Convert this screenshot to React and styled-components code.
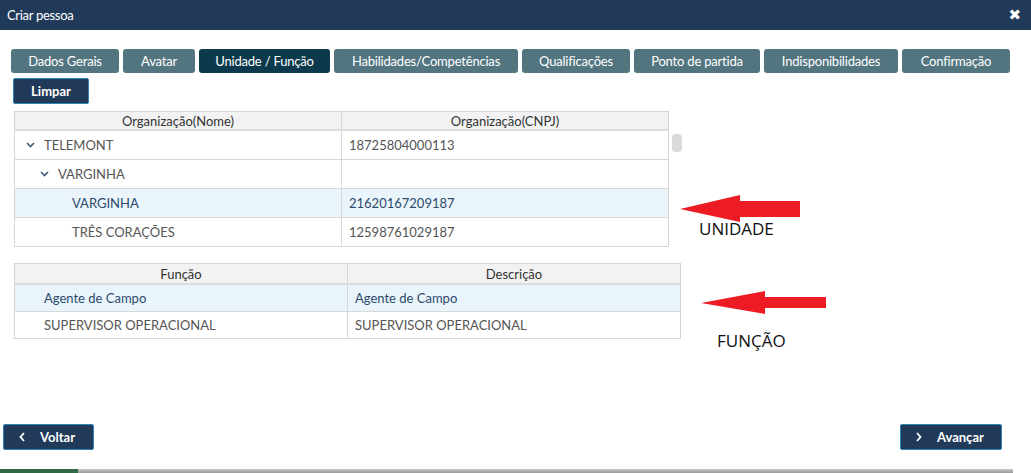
import React from 'react';
import styled, {createGlobalStyle} from 'styled-components';

const GlobalStyle = createGlobalStyle`
    html, body{
        margin: 0;
        padding: 0;
        background: #fff;
        font-family: Lato, "Open Sans", Arial, sans-serif;
    }
`

const Page = styled('div')`
    position: relative;
    width: 1031px;
    height: 473px;
    display: flex;
    flex-direction: column;
    overflow: hidden;
`

const Header = styled('div')`
    height: 30px;
    flex-shrink: 0;
    display: flex;
    align-items: center;
    justify-content: space-between;
    padding: 0 10px 0 7px;
    background: #213a5a;
    color: #fff;

    h3{
        margin: 0;
        font-size: 13px;
        font-weight: 400;
        letter-spacing: -0.3px;
    }
`

const Close = styled('span')`
    font-size: 15px;
    font-weight: 900;
    font-family: "DejaVu Sans", sans-serif;
    line-height: 1;
`

const Body = styled('div')`
    flex: 1;
    display: flex;
    flex-direction: column;
    padding: 19px 0 0 11px;
`

const Tabs = styled('div')`
    display: flex;
    gap: 4px;
`

const Tab = styled('div')`
    width: ${p => p.w}px;
    height: 24px;
    display: flex;
    align-items: center;
    justify-content: center;
    border-radius: 3px;
    background: ${p => p.active ? '#0c394c' : '#52757f'};
    color: #fff;
    font-size: 13px;
    letter-spacing: -0.2px;
`

const ClearButton = styled('button')`
    margin: 5px 0 0 2px;
    width: 76px;
    height: 26px;
    border: 1px solid #2d83b5;
    border-radius: 2px;
    background: #213a5a;
    color: #fff;
    font-family: Lato, sans-serif;
    font-weight: 700;
    font-size: 13px;
    padding: 0;
`

const TableRow = styled('div')`
    display: flex;
    align-items: flex-start;
    margin: ${p => p.top}px 0 0 3px;
`

const Grid = styled('div')`
    width: ${p => p.w}px;
    border-left: 1px solid #d5d5d5;
    border-right: 1px solid #d5d5d5;
    box-sizing: border-box;
`

const HeadRow = styled('div')`
    display: grid;
    grid-template-columns: ${p => p.cols};
    height: ${p => p.h}px;
    background: #f2f2f2;
    border-top: 1px solid #d5d5d5;
    border-bottom: 2px solid #dcdcdc;
    box-sizing: border-box;

    div{
        display: flex;
        align-items: center;
        justify-content: center;
        font-size: 13px;
        color: #333;
    }
    div + div{
        border-left: 1px solid #d5d5d5;
    }
`

const Row = styled('div')`
    display: grid;
    grid-template-columns: ${p => p.cols};
    height: ${p => p.h}px;
    background: ${p => p.selected ? '#eaf5fb' : '#fff'};
    border-bottom: 1px solid #d8d8d8;
    box-sizing: border-box;
    color: ${p => p.selected ? '#2c4a6c' : '#555'};
    font-size: 13px;
`

const Cell = styled('div')`
    display: flex;
    align-items: center;
    padding-left: ${p => p.pad}px;
    & + &{
        border-left: 1px solid #d8d8d8;
    }
`

const Chevron = styled('svg')`
    width: 9px;
    height: 6px;
    margin-right: 9px;
`

const ScrollTrack = styled('div')`
    width: 16px;
    padding-top: 23px;
    display: flex;
    justify-content: center;
`

const Thumb = styled('div')`
    width: 10px;
    height: 18px;
    border-radius: 4px;
    background: #dadada;
`

const Footer = styled('div')`
    display: flex;
    justify-content: space-between;
    padding: 0 29px 19px 3px;
`

const NavButton = styled('button')`
    width: ${p => p.w}px;
    height: 26px;
    display: flex;
    align-items: center;
    gap: 15px;
    padding: 0 0 0 15px;
    border: 1px solid #2d83b5;
    border-radius: 2px;
    background: #213a5a;
    color: #fff;
    font-family: Lato, sans-serif;
    font-weight: 700;
    font-size: 13px;

    svg{
        width: 6px;
        height: 10px;
    }
`

const BottomStrip = styled('div')`
    height: 4px;
    width: 1013px;
    display: flex;
    background: linear-gradient(#c8c8c8, #9a9a9a);

    span{
        width: 78px;
        background: #2f6a45;
    }
`

const Note = styled('div')`
    position: absolute;
    left: ${p => p.x}px;
    top: ${p => p.y}px;
    font-family: "Open Sans", "Liberation Sans", sans-serif;
    font-size: 17px;
    color: #111;
`

const Arrow = styled('svg')`
    position: absolute;
    left: ${p => p.x}px;
    top: ${p => p.y}px;
`

const tabs = [
    ['Dados Gerais', 108],
    ['Avatar', 72],
    ['Unidade / Função', 131, true],
    ['Habilidades/Competências', 184],
    ['Qualificações', 108],
    ['Ponto de partida', 126],
    ['Indisponibilidades', 134],
    ['Confirmação', 108],
];

const orgs = [
    {name: 'TELEMONT', cnpj: '18725804000113', level: 0, open: true},
    {name: 'VARGINHA', cnpj: '', level: 1, open: true},
    {name: 'VARGINHA', cnpj: '21620167209187', level: 2, selected: true},
    {name: 'TRÊS CORAÇÕES', cnpj: '12598761029187', level: 2},
];

const funcoes = [
    {name: 'Agente de Campo', desc: 'Agente de Campo', selected: true},
    {name: 'SUPERVISOR OPERACIONAL', desc: 'SUPERVISOR OPERACIONAL'},
];

function ChevronDown(){
    return(
        <Chevron viewBox="0 0 9 6">
            <path d="M1 1 L4.5 4.5 L8 1" fill="none" stroke="#3b5878" strokeWidth="1.6"/>
        </Chevron>
    )
}

function App(){
    const orgCols = '326px 1fr';
    const funcCols = '332px 1fr';

    return(
        <Page>
            <GlobalStyle/>
            <Header>
                <h3>Criar pessoa</h3>
                <Close>✖</Close>
            </Header>
            <Body>
                <Tabs>
                    {tabs.map(([label, w, active]) => (
                        <Tab key={label} w={w} active={active}>{label}</Tab>
                    ))}
                </Tabs>
                <ClearButton>Limpar</ClearButton>

                <TableRow top={7}>
                    <Grid w={655}>
                        <HeadRow cols={orgCols} h={20}>
                            <div>Organização(Nome)</div>
                            <div>Organização(CNPJ)</div>
                        </HeadRow>
                        {orgs.map((o, i) => (
                            <Row key={i} cols={orgCols} h={29} selected={o.selected}>
                                <Cell pad={o.level === 2 ? 57 : 11 + o.level * 14}>
                                    {o.open && <ChevronDown/>}
                                    {o.name}
                                </Cell>
                                <Cell pad={7}>{o.cnpj}</Cell>
                            </Row>
                        ))}
                    </Grid>
                    <ScrollTrack><Thumb/></ScrollTrack>
                </TableRow>

                <TableRow top={16}>
                    <Grid w={667}>
                        <HeadRow cols={funcCols} h={22}>
                            <div>Função</div>
                            <div>Descrição</div>
                        </HeadRow>
                        {funcoes.map((f, i) => (
                            <Row key={i} cols={funcCols} h={27} selected={f.selected}>
                                <Cell pad={29}>{f.name}</Cell>
                                <Cell pad={7}>{f.desc}</Cell>
                            </Row>
                        ))}
                    </Grid>
                </TableRow>
            </Body>
            <Footer>
                <NavButton w={91}>
                    <svg viewBox="0 0 6 10"><path d="M5 1 L1.5 5 L5 9" fill="none" stroke="#fff" strokeWidth="1.8"/></svg>
                    Voltar
                </NavButton>
                <NavButton w={102}>
                    <svg viewBox="0 0 6 10"><path d="M1 1 L4.5 5 L1 9" fill="none" stroke="#fff" strokeWidth="1.8"/></svg>
                    Avançar
                </NavButton>
            </Footer>
            <BottomStrip><span/></BottomStrip>

            <Arrow x={678} y={193} width={124} height={30} viewBox="0 0 124 30">
                <polygon points="2,16 62,2 62,8 122,8 122,24 62,24 62,29" fill="#ed1c24"/>
            </Arrow>
            <Note x={699} y={217}>UNIDADE</Note>
            <Arrow x={699} y={289} width={129} height={26} viewBox="0 0 129 26">
                <polygon points="2,14 66,2 66,8 127,8 127,19 66,19 66,25" fill="#ed1c24"/>
            </Arrow>
            <Note x={717} y={329}>FUNÇÃO</Note>
        </Page>
    )
}

export default App;
